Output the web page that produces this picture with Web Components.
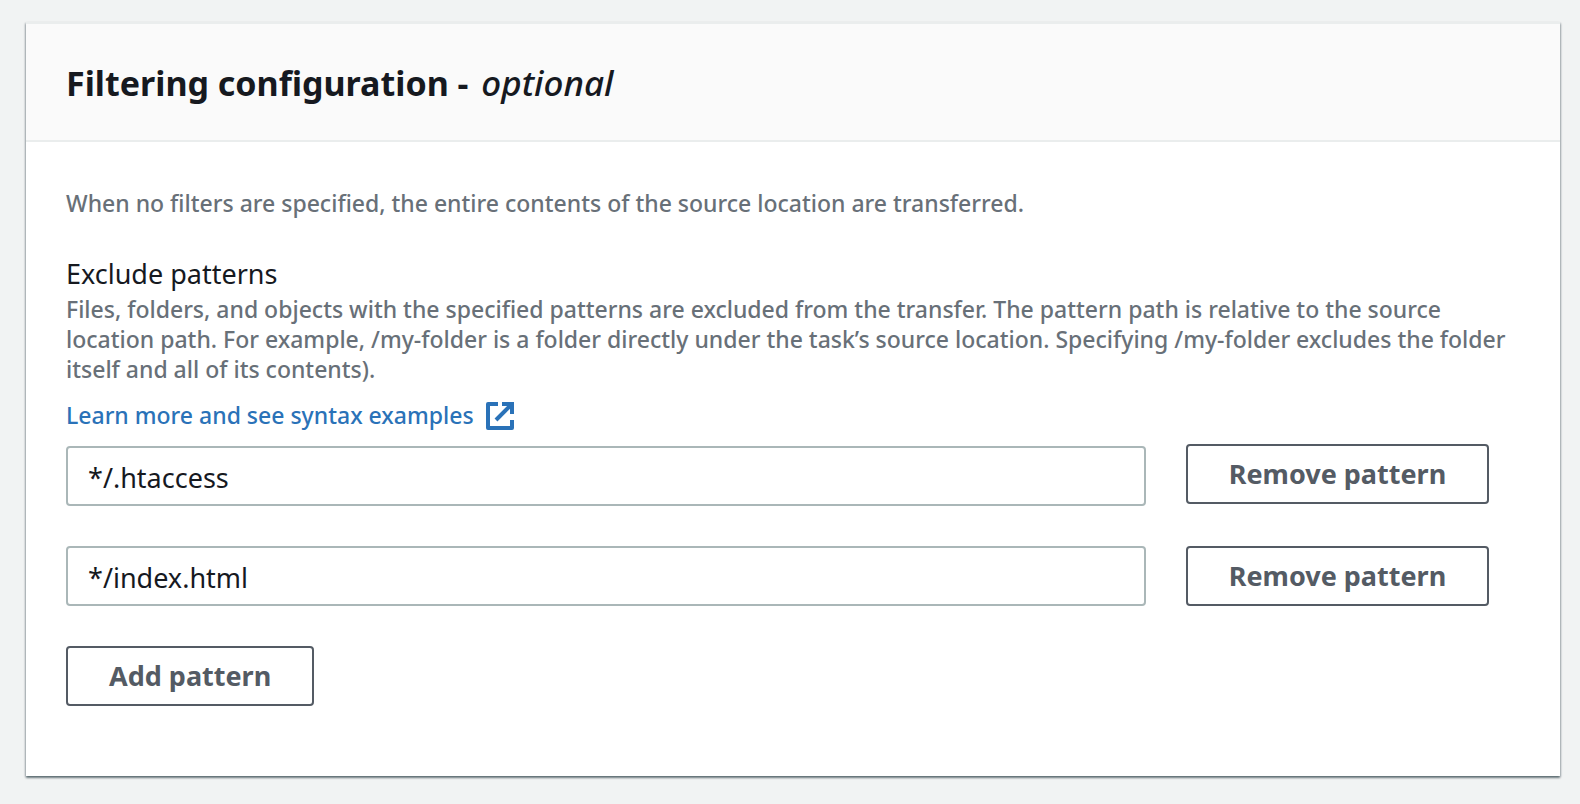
<!DOCTYPE html>
<html lang="en">
<head>
<meta charset="utf-8">
<meta name="viewport" content="width=device-width, initial-scale=1">
<title>Filtering configuration</title>
<style>
  body {
    margin: 0;
    padding: 22px 20px 28px 26px;
    background: #f1f3f3;
    color: #16191f;
    font: 500 23px/30px "Noto Sans", "Open Sans", sans-serif;
  }
  panel-card i { margin-left: 4px; font-size: 35px; font-weight: 500; }
</style>
</head>
<body>
<panel-card>
  <span slot="title">Filtering configuration - <i>optional</i></span>
  <hint-text>When no filters are specified, the entire contents of the source location are transferred.</hint-text>
  <form-section>
    <span slot="label">Exclude patterns</span>
    <hint-text slot="description">Files, folders, and objects with the specified patterns are excluded from the transfer. The pattern path is relative to the source location path. For example, /my-folder is a folder directly under the task’s source location. Specifying /my-folder excludes the folder itself and all of its contents).</hint-text>
    <external-link slot="link" href="#syntax">Learn more and see syntax examples</external-link>
    <pattern-row value="*/.htaccess" label="Exclude pattern 1"></pattern-row>
    <pattern-row value="*/index.html" label="Exclude pattern 2"></pattern-row>
    <outline-button>Add pattern</outline-button>
  </form-section>
</panel-card>

<script>
function define(name, html, setup) {
  const template = document.createElement('template');
  template.innerHTML = html;
  customElements.define(name, class extends HTMLElement {
    constructor() {
      super();
      this.attachShadow({ mode: 'open' }).append(template.content.cloneNode(true));
    }
    connectedCallback() {
      if (setup) setup(this, this.shadowRoot);
    }
  });
}

define('panel-card', `
  <style>
    :host {
      display: block;
      background: #fff;
      border-top: 2px solid #eaeded;
      box-shadow: 0 2px 2px rgba(0, 28, 36, .45),
                  1px 1px 2px rgba(0, 20, 36, .2),
                  -1px 1px 2px rgba(0, 20, 36, .2);
    }
    header {
      padding: 37px 40px 35px;
      background: #fafafa;
      border-bottom: 2px solid #eaeded;
    }
    h2 { margin: 0; font-size: 34px; line-height: 44px; font-weight: 700; }
    .body { padding: 46px 41px 70px 40px; display: flex; flex-direction: column; gap: 40px; }
  </style>
  <section>
    <header><h2><slot name="title"></slot></h2></header>
    <div class="body"><slot></slot></div>
  </section>`);

define('hint-text', `
  <style>
    :host { display: block; color: #687078; }
    p { margin: 0; }
  </style>
  <p><slot></slot></p>`);

define('form-section', `
  <style>
    :host { display: block; }
    h3 { margin: 0 0 4px; font-size: 27px; line-height: 32px; font-weight: 400; }
    .link { margin: 16px 0 14px; }
    .items { display: flex; flex-direction: column; align-items: stretch; gap: 40px; }
    ::slotted(pattern-row:first-of-type) { --field-top: 2px; }
  </style>
  <h3 id="heading"><slot name="label"></slot></h3>
  <slot name="description"></slot>
  <div class="link"><slot name="link"></slot></div>
  <div class="items" role="group" aria-labelledby="heading"><slot></slot></div>`);

define('external-link', `
  <style>
    :host { display: block; }
    a { display: inline-flex; align-items: center; gap: 12px; color: #2a72b8; text-decoration: none; vertical-align: top; }
    a:hover { text-decoration: underline; }
    svg { width: 28px; height: 28px; margin-top: 2px; flex: none; }
  </style>
  <a><slot></slot><svg viewBox="0 0 28 28" fill="none" stroke="currentColor" stroke-width="4" aria-hidden="true">
    <path d="M12 2H2v24h24v-8" stroke-linejoin="round"/>
    <path d="M16 2h10v10"/>
    <path d="M10 18 25 3"/>
  </svg></a>`, (host, root) => {
    root.querySelector('a').href = host.getAttribute('href');
  });

define('outline-button', `
  <style>
    :host { display: block; }
    button {
      display: block;
      height: 60px;
      padding: 0 41px;
      border: 2px solid #545b64;
      border-radius: 4px;
      background: #fff;
      color: #545b64;
      font: 700 27px/32px "Noto Sans", "Open Sans", sans-serif;
      white-space: nowrap;
      cursor: pointer;
    }
    button:hover { background: #fafafa; color: #16191f; }
  </style>
  <button type="button"><slot></slot></button>`);

define('pattern-row', `
  <style>
    :host {
      display: grid;
      grid-template-columns: repeat(4, minmax(0, 1fr));
      column-gap: 40px;
      align-items: start;
    }
    input {
      grid-column: span 3;
      box-sizing: border-box;
      width: 100%;
      height: 60px;
      margin: var(--field-top, 0) 0 0;
      padding: 2px 20px 0;
      border: 2px solid #aab7b8;
      border-radius: 4px;
      background: #fff;
      color: #16191f;
      font: 400 27px/32px "Noto Sans", "Open Sans", sans-serif;
    }
  </style>
  <input type="text" spellcheck="false">
  <outline-button>Remove pattern</outline-button>`, (host, root) => {
    const input = root.querySelector('input');
    input.value = host.getAttribute('value');
    input.setAttribute('aria-label', host.getAttribute('label'));
  });
</script>
</body>
</html>
